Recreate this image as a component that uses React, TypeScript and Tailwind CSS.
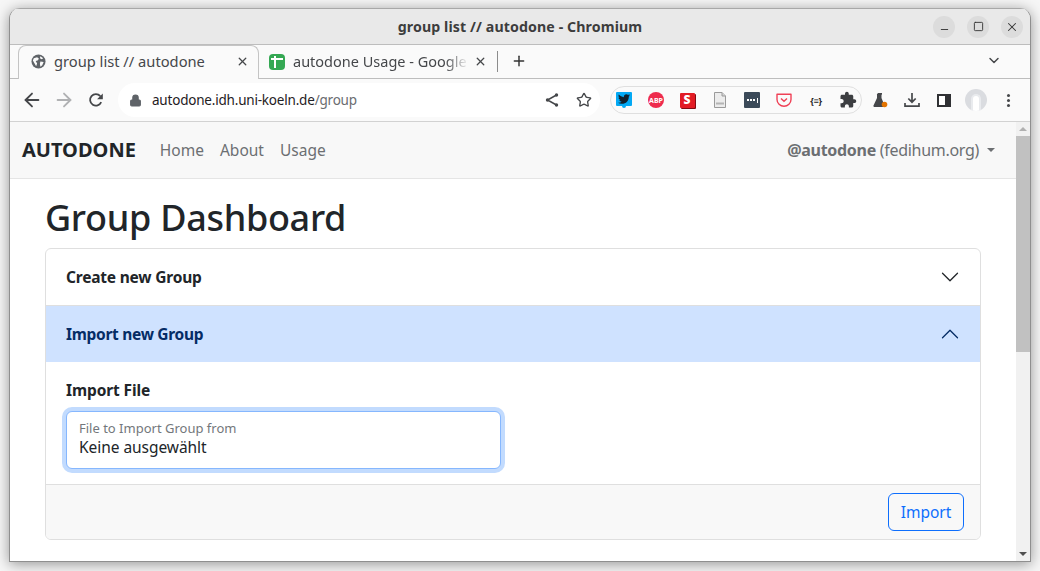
import { ArrowLeft, ArrowRight, ChevronDown, Lock, Minus, Plus, Square, Star, X } from "lucide-react";
import { FaTwitter } from "react-icons/fa";

function Globe() {
  return (
    <svg width="15" height="15" viewBox="0 0 16 16" className="shrink-0">
      <circle cx="8" cy="8" r="7.5" fill="#5f6368" />
      <path d="M3 4.5 6.5 3.5 8.5 5 7 7 5 7.5 6.500 10 5.500 13 3.500 9.500 2 7Z M10 8l3.500 0.500L12 12l-2 1.500-.5-3Z M10 2.500l3 2-1.500 1-2-1Z" fill="#fafafa" />
    </svg>
  );
}

function SheetsIcon() {
  return (
    <div className="relative size-4 shrink-0 rounded-sm bg-[#34a853]">
      <div className="absolute left-[2px] right-[2px] top-[4px] h-[2px] bg-white" />
      <div className="absolute bottom-[2px] left-[5px] top-[2px] w-[2px] bg-white" />
    </div>
  );
}

function AccordionChevron({ up }: { up?: boolean }) {
  return (
    <svg width="20" height="20" viewBox="0 0 16 16" fill="currentColor" className={up ? "rotate-180" : ""}>
      <path fillRule="evenodd" d="M1.646 4.646a.5.5 0 0 1 .708 0L8 10.293l5.646-5.647a.5.5 0 0 1 .708.708l-6 6a.5.5 0 0 1-.708 0l-6-6a.5.5 0 0 1 0-.708z" />
    </svg>
  );
}

function ToolButton({ children, className }: { children: React.ReactNode; className?: string }) {
  return <div className={`flex h-8 w-8 shrink-0 items-center justify-center ${className ?? ""}`}>{children}</div>;
}

function WindowButton({ children }: { children: React.ReactNode }) {
  return <div className="flex size-[22px] items-center justify-center rounded-full bg-[#dcdcdc] text-[#333]">{children}</div>;
}

export default function App() {
  return (
    <div className="h-[571px] w-[1040px] overflow-hidden bg-[#f6f6f6] px-[9px] pb-[9px] pt-[8px] font-['Noto_Sans',sans-serif]">
      <div className="flex h-[554px] flex-col overflow-hidden rounded-t-[11px] border border-t-0 border-[#8f8f8f] bg-white shadow-[0_2px_14px_rgba(0,0,0,0.4)]">
        {/* title bar */}
        <div className="grid h-[37px] shrink-0 grid-cols-[1fr_auto_1fr] items-center border-b border-t border-[#bdbdbd] border-t-[#a8a8a8] bg-[#e9e9e9]">
          <div />
          <p className="text-[14.2px] font-bold tracking-[0.1px] text-[#3d3d3d]">group list // autodone - Chromium</p>
          <div className="flex items-center justify-end gap-[12px] pr-[7px]">
            <WindowButton><Minus size={11} className="translate-y-[3px]" /></WindowButton>
            <WindowButton><Square size={11} strokeWidth={2} /></WindowButton>
            <WindowButton><X size={14} strokeWidth={1.8} /></WindowButton>
          </div>
        </div>

        {/* tabs */}
        <div className="flex h-[34px] shrink-0 items-end border-b border-[#bdbdbd] bg-[#fafafa] pl-[8px]">
          <div className="z-10 -mb-px flex h-[34px] w-[241px] items-center rounded-t-lg border border-b-0 border-[#c4c4c4] bg-[#fafafa] pb-[2px] pl-[12px] pr-[9px]">
            <Globe />
            <span className="ml-[8px] min-w-0 flex-1 whitespace-nowrap text-[14.7px] text-[#45474a]">group list // autodone</span>
            <X size={13} strokeWidth={2.4} className="shrink-0 text-[#45474a]" />
          </div>
          <div className="flex h-[33px] w-[238px] items-center pl-[10px] pr-[10px]">
            <SheetsIcon />
            <span className="ml-[8px] min-w-0 flex-1 whitespace-nowrap text-[14.5px] text-[#45474a] [mask-image:linear-gradient(to_right,black_84%,transparent_97%)]">autodone Usage - Google</span>
            <X size={13} strokeWidth={2.4} className="shrink-0 text-[#45474a]" />
          </div>
          <div className="mb-[6px] h-[21px] w-px bg-[#8c8c8c]" />
          <div className="mb-[9px] ml-[13px] flex size-4 items-center justify-center">
            <Plus size={16} strokeWidth={2.2} className="text-[#333]" />
          </div>
          <div className="mb-[10px] ml-auto mr-[28px] flex size-4 items-center justify-center">
            <ChevronDown size={17} strokeWidth={2.2} className="text-[#45474a]" />
          </div>
        </div>

        {/* toolbar */}
        <div className="flex h-[43px] shrink-0 items-center border-b border-[#d2d2d2] bg-[#fafafa] pl-[6px] pr-[5px]">
          <ToolButton><ArrowLeft size={22} strokeWidth={2} className="text-[#45474a]" /></ToolButton>
          <ToolButton><ArrowRight size={22} strokeWidth={2} className="text-[#b0b1b3]" /></ToolButton>
          <ToolButton>
            <svg width="16" height="16" viewBox="0 0 16 16" fill="none">
              <path d="M13.2 10.2A5.8 5.8 0 1 1 12.3 4.1" stroke="#45474a" strokeWidth="1.8" />
              <path d="M14.8 1.5v5.700H9.100Z" fill="#45474a" />
            </svg>
          </ToolButton>
          <div className="ml-[6px] flex h-[34px] w-[482px] shrink-0 items-center rounded-full bg-white pl-[11px]">
            <Lock size={13} fill="#5f6368" className="shrink-0 text-[#5f6368]" />
            <p className="ml-[10px] flex-1 whitespace-nowrap text-[13.5px] tracking-[-0.2px] text-[#1f2023]">
              autodone.idh.uni-koeln.de<span className="text-[#6a6c70]">/group</span>
            </p>
            <ToolButton>
              <svg width="16" height="16" viewBox="0 0 16 16" fill="#45474a" stroke="#45474a">
                <path d="M12.5 3 3.5 8l9 5" fill="none" strokeWidth="1.5" />
                <circle cx="12.5" cy="3" r="1.7" strokeWidth="0" />
                <circle cx="3.5" cy="8" r="1.7" strokeWidth="0" />
                <circle cx="12.5" cy="13" r="1.7" strokeWidth="0" />
              </svg>
            </ToolButton>
            <ToolButton><Star size={16} strokeWidth={2} className="text-[#45474a]" /></ToolButton>
          </div>
          <div className="ml-[10px] flex h-[28px] w-[252px] shrink-0 items-center rounded-full border border-[#dfdfdf]">
            <ToolButton className="-ml-[3px]">
              <div className="relative flex h-[14px] w-4 -translate-y-px items-center justify-center rounded-[1px] bg-[#03a9f4]">
                <FaTwitter size={12} className="text-[#10202c]" />
                <span className="absolute -bottom-[2px] left-[6px] size-1 rounded-b-full bg-[#03a9f4]" />
              </div>
            </ToolButton>
            <ToolButton>
              <div className="flex size-4 items-center justify-center rounded-full bg-[#ee2b4d] text-[7px] font-bold leading-none text-white">ABP</div>
            </ToolButton>
            <ToolButton>
              <div className="flex size-[15px] -translate-x-px items-center justify-center rounded-[1px] bg-[#e21b24] text-[12px] font-black leading-none text-white shadow-[1px_1px_0_#800b12]">S</div>
            </ToolButton>
            <ToolButton>
              <svg width="16" height="16" viewBox="0 0 16 16">
                <path d="M2.5.5h7.5l3.5 3.5v11.5h-11Z" fill="#ececec" stroke="#9a9a9a" />
                <path d="M10 .5v3.5h3.5" fill="#d5d5d5" stroke="#9a9a9a" />
                <rect x="4" y="10.5" width="8" height="2" fill="#b4b4b4" />
              </svg>
            </ToolButton>
            <ToolButton>
              <div className="flex size-4 items-center justify-center gap-px rounded-[1px] bg-[#3b4a59]">
                <span className="size-[2px] bg-white" />
                <span className="size-[2px] bg-white" />
                <span className="size-[2px] bg-white" />
                <span className="ml-px h-[5px] w-px bg-white" />
              </div>
            </ToolButton>
            <ToolButton>
              <svg width="16" height="16" viewBox="0 0 16 16" fill="none" stroke="#ef4056">
                <path d="M1 2.2h14v5.300A7 6.800 0 0 1 1 7.500Z" strokeWidth="1.4" strokeLinejoin="round" />
                <path d="M5 6.5 8 9.300 11 6.500" strokeWidth="1.4" />
              </svg>
            </ToolButton>
            <ToolButton>
              <span className="whitespace-nowrap text-[9px] font-bold leading-none tracking-[-0.3px] text-[#222]">{"{≡}"}</span>
            </ToolButton>
            <ToolButton>
              <svg width="18" height="18" viewBox="0 0 24 24" fill="#3c3e41">
                <path d="M20.5 11H19V7c0-1.100-.9-2-2-2h-4V3.500C13 2.120 11.880 1 10.500 1S8 2.120 8 3.500V5H4c-1.100 0-1.990.9-1.990 2v3.800H3.500c1.490 0 2.700 1.210 2.700 2.700s-1.210 2.700-2.700 2.700H2V20c0 1.100.9 2 2 2h3.800v-1.500c0-1.490 1.210-2.700 2.700-2.700 1.490 0 2.700 1.210 2.700 2.700V22H17c1.100 0 2-.9 2-2v-4h1.500c1.380 0 2.500-1.120 2.500-2.500S21.880 11 20.500 11z" />
              </svg>
            </ToolButton>
          </div>
          <ToolButton className="ml-[2px]">
            <svg width="16" height="16" viewBox="0 0 16 16">
              <path d="M6 1h4v1.500l-.5.200V6l3 7.500A1 1 0 0 1 11.500 15H2.500a1 1 0 0 1-1-1.500L5 6V2.700L4.800 2.500Z" fill="#45474a" />
              <circle cx="12.5" cy="12.5" r="2.8" fill="#e37400" />
            </svg>
          </ToolButton>
          <ToolButton>
            <svg width="16" height="16" viewBox="0 0 16 16" fill="none" stroke="#45474a" strokeWidth="1.7">
              <path d="M8 1v9M4.300 6.500 8 10.200l3.700-3.700M1 11v3.200h14V11" />
            </svg>
          </ToolButton>
          <ToolButton>
            <div className="flex h-[13px] w-[14px] justify-end border-2 border-[#303134] bg-white">
              <div className="w-[4px] bg-[#303134]" />
            </div>
          </ToolButton>
          <ToolButton>
            <div className="flex size-[22px] items-end justify-center overflow-hidden rounded-full bg-[#dadce0]">
              <div className="h-[17px] w-[10px] rounded-t-full border-2 border-b-0 border-[#e9ebee] bg-white" />
            </div>
          </ToolButton>
          <ToolButton>
            <div className="flex flex-col gap-[2px]">
              <span className="size-[3px] rounded-full bg-[#45474a]" />
              <span className="size-[3px] rounded-full bg-[#45474a]" />
              <span className="size-[3px] rounded-full bg-[#45474a]" />
            </div>
          </ToolButton>
        </div>

        {/* page */}
        <div className="flex min-h-0 flex-1">
          <div className="min-w-0 flex-1">
            <nav className="flex h-[57px] items-center border-b border-[#e5e5e5] bg-[#f8f8f8] pl-[12px] pr-[21px]">
              <span className="text-[20px] font-bold text-[#212529]">AUTODONE</span>
              <div className="ml-[24px] flex gap-[16px] pt-[2px] text-[15.5px] text-[#6c6f72]">
                <span>Home</span>
                <span>About</span>
                <span>Usage</span>
              </div>
              <div className="ml-auto flex items-center text-[16px] tracking-[-0.3px] text-[#6c6f72]">
                <span><b className="font-bold">@autodone</b> (fedihum.org)</span>
                <span className="ml-[8px] size-0 border-x-[4px] border-t-[4px] border-x-transparent border-t-[#6c6f72]" />
              </div>
            </nav>
            <main className="px-[35px]">
              <h1 className="mt-[15px] h-[54px] text-[36px] font-medium leading-[48px] tracking-[-0.3px] text-[#212529]">Group Dashboard</h1>
              <div className="overflow-hidden rounded-md border border-[#dfdfdf]">
                <div className="flex h-[56px] items-center justify-between px-[20px] text-[#212529]">
                  <span className="pt-[2px] text-[15.5px] font-bold tracking-[-0.2px]">Create new Group</span>
                  <AccordionChevron />
                </div>
                <div className="flex h-[57px] items-center justify-between border-t border-[#dfdfdf] bg-[#cfe2ff] px-[20px] text-[#052c65]">
                  <span className="pt-[2px] text-[15.5px] font-bold tracking-[-0.3px]">Import new Group</span>
                  <AccordionChevron up />
                </div>
                <div className="h-[122px] px-[20px] pt-[16px]">
                  <p className="text-[15.5px] font-bold leading-[24px] tracking-[-0.1px] text-[#212529]">Import File</p>
                  <div className="mt-[9px] h-[58px] w-[435px] rounded-md border border-[#86b7fe] bg-white pl-[12px] pt-[7px] shadow-[0_0_0_4px_rgba(13,110,253,0.25)]">
                    <p className="text-[13px] leading-[18px] text-[#73777b]">File to Import Group from</p>
                    <p className="text-[15.5px] leading-[20px] tracking-[-0.05px] text-[#212529]">Keine ausgewählt</p>
                  </div>
                </div>
                <div className="flex h-[55px] items-center justify-end border-t border-[#dfdfdf] bg-[#f8f8f8] pr-[16px]">
                  <button className="h-[38px] w-[76px] rounded-md border border-[#0d6efd] pt-[2px] text-[15.5px] text-[#0d6efd]">Import</button>
                </div>
              </div>
            </main>
          </div>

          {/* scrollbar */}
          <div className="flex w-[14px] shrink-0 flex-col items-center bg-[#f1f1f1]">
            <div className="flex h-[14px] items-center justify-center">
              <span className="size-0 border-x-[4px] border-b-[4px] border-x-transparent border-b-[#b0b0b0]" />
            </div>
            <div className="h-[216px] w-full bg-[#c1c1c1]" />
            <div className="flex-1" />
            <div className="flex h-[14px] items-center justify-center">
              <span className="size-0 border-x-[4px] border-t-[4px] border-x-transparent border-t-[#505050]" />
            </div>
          </div>
        </div>
      </div>
    </div>
  );
}
